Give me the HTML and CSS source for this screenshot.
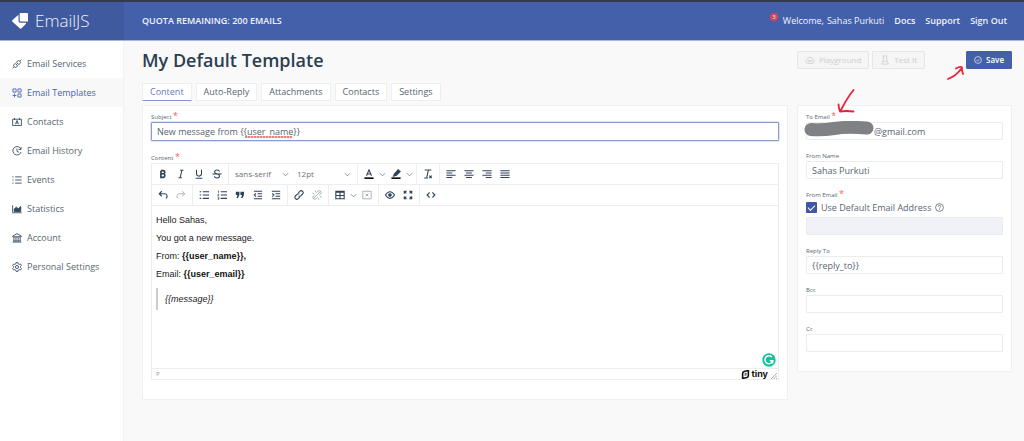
FILE: index.html
```html
<!DOCTYPE html>
<html lang="en">
<head>
<meta charset="utf-8">
<title>EmailJS - My Default Template</title>
<link rel="stylesheet" href="styles.css">
</head>
<body>
<header class="topbar">
  <a class="brand" href="#">
    <svg class="brand-mark" viewBox="0 0 16 16"><path d="M7.700 0H15q1 0 1 1v7.500H9q-1.300 0-1.300-1.300z"/><path d="M6.500 1.800V7.700q0 2 2 2H14.200q0 1-.9 1.900L9.800 15q-1.200 1.300-2.400 0L.5 8.700q-.8-.9 0-1.700z"/></svg>
    <span>EmailJS</span>
  </a>
  <div class="quota">QUOTA REMAINING: 200 EMAILS</div>
  <nav class="user-nav">
    <span class="welcome"><span class="badge">3</span>Welcome,</span>
    <a class="user" href="#">Sahas Purkuti</a>
    <a href="#">Docs</a>
    <a href="#">Support</a>
    <a href="#">Sign Out</a>
  </nav>
</header>
<div class="shell">
  <nav class="sidebar">
    <a href="#"><svg viewBox="0 0 16 16"><path d="M1 15l2-2M13 3l2-2M5 7l4 4-1.500 1.500a2.800 2.800 0 0 1-4 0 2.800 2.800 0 0 1 0-4zM7 5l1.500-1.500a2.800 2.800 0 0 1 4 0 2.800 2.800 0 0 1 0 4L11 9zM7 9l2-2"/></svg>Email Services</a>
    <a href="#" class="active"><svg viewBox="0 0 16 16"><path d="M1.500 1.500h5v5h-5zM9.500 1.500h5v5h-5zM9.500 9.500h5v5h-5zM4 9v6M1 12h6"/></svg>Email Templates</a>
    <a href="#"><svg viewBox="0 0 16 16"><path d="M1 3.500h14v10H1zM4 1.500v3M12 1.500v3M5.500 11.500L8 5.500l2.500 6M6.500 9.500h3"/></svg>Contacts</a>
    <a href="#"><svg viewBox="0 0 16 16"><path d="M14 4.500A6.700 6.700 0 1 0 14.500 9.500M14.500 1.500v4h-4M8 4v4.500l3 1.500"/></svg>Email History</a>
    <a href="#"><svg viewBox="0 0 16 16"><path d="M5 3h10.500M5 8h10.500M5 13h10.500M.5 3h2M.5 8h2M.5 13h2"/></svg>Events</a>
    <a href="#"><svg viewBox="0 0 16 16"><path d="M1 2v12h14.500"/><path d="M3.500 12V8l3.500-3 3 2.500L14 4v8z" fill="currentColor"/></svg>Statistics</a>
    <a href="#"><svg viewBox="0 0 16 16"><path d="M1 6V5l7-4 7 4v1zM3 6v7M6.300 6v7M9.700 6v7M13 6v7M1 14.500h14M2 12.800h12"/></svg>Account</a>
    <a href="#"><svg viewBox="0 0 16 16"><path d="M6.500 1h3l.5 2 1.500.8 2-.6 1.500 2.600L13.600 7.200v1.600l1.400 1.400-1.500 2.600-2-.6-1.500.8-.5 2h-3L6 13l-1.500-.8-2 .6L1 10.200l1.400-1.400V7.200L1 5.800l1.500-2.600 2 .6L6 3z"/><circle cx="8" cy="8" r="2.500"/></svg>Personal Settings</a>
  </nav>
  <main class="page">
    <div class="page-head">
      <h1>My Default Template</h1>
      <div class="actions">
        <button class="btn" disabled><svg viewBox="0 0 16 16"><path d="M4 13.500a3.300 3.300 0 0 1-.8-6.300 5 5 0 0 1 9.600 0 3.300 3.300 0 0 1-.8 6.300zM8 9.500C7 8 4.500 8 4.500 9.800S7 11.500 8 9.800 11.500 8 11.500 9.800 9 11.500 8 9.500z"/></svg>Playground</button>
        <button class="btn" disabled><svg viewBox="0 0 16 16"><path d="M4.500 1.500h7M5.500 1.500V7L2.500 14.500h11L10.500 7V1.500M4.500 10h7"/></svg>Test It</button>
        <div class="save-wrap">
          <button class="btn save"><svg viewBox="0 0 16 16"><circle cx="8" cy="8" r="6.800"/><path d="M5 8.300l2.200 2.200L11 5.800"/></svg>Save</button>
          <svg class="arrow-save" viewBox="0 0 17 14"><path d="M1 13Q9 10 14 3M9 2.500Q13 0 15 1.500Q14.500 4 16 8"/></svg>
        </div>
      </div>
    </div>
    <div class="tabs">
      <button class="tab current">Content</button>
      <button class="tab">Auto-Reply</button>
      <button class="tab">Attachments</button>
      <button class="tab">Contacts</button>
      <button class="tab">Settings</button>
    </div>
    <div class="columns">
      <section class="card">
        <div class="field subject">
          <label for="subject">Subject <i>*</i></label>
          <div class="over">
            <input id="subject" class="focused" type="text" spellcheck="false" value="New message from {{user_name}}">
            <span class="squiggle"></span>
          </div>
        </div>
        <div class="field last">
          <label id="body-label">Content <i>*</i></label>
          <div class="editor">
            <div class="bar">
              <div class="group">
                <button aria-label="Bold"><svg viewBox="0 0 12 12"><path class="w2" d="M3.500 2v8h3a2.200 2.200 0 0 0 0-4.300h-3M3.500 5.700h2.800a1.800 1.800 0 0 0 0-3.700H3.500"/></svg></button>
                <button aria-label="Italic"><svg viewBox="0 0 12 12"><path d="M5 1.500h4M3 10.500h4M7 1.500l-2 9"/></svg></button>
                <button aria-label="Underline"><svg viewBox="0 0 12 12"><path d="M3 1v4.500a3 3 0 0 0 6 0V1M2 11h8"/></svg></button>
                <button aria-label="Strikethrough"><svg viewBox="0 0 12 12"><path d="M9 3Q8.500 1.200 6 1.200T3 3.300Q3 5 6 5.800T9 8.500Q9 10.700 6 10.700T3 8.800M.5 6h11"/></svg></button>
              </div>
              <div class="group">
                <button class="pick font">sans-serif<svg viewBox="0 0 8 8"><path d="M1 2.500l3 3 3-3"/></svg></button>
                <button class="pick size">12pt<svg viewBox="0 0 8 8"><path d="M1 2.500l3 3 3-3"/></svg></button>
              </div>
              <div class="group">
                <button aria-label="Text color"><svg viewBox="0 0 12 12"><path d="M3 8l3-7 3 7M4 6h4"/><path class="w2" stroke="#111" d="M.5 11h11"/></svg></button>
                <button class="mini" aria-label="Text colors"><svg viewBox="0 0 8 8"><path d="M1 2.500l3 3 3-3"/></svg></button>
                <button aria-label="Highlight"><svg viewBox="0 0 12 12"><path d="M4 6l4.500-5L11 3 6.500 7.500 3 8.500z" fill="currentColor"/><path class="w2" stroke="#111" d="M.5 11h11"/></svg></button>
                <button class="mini" aria-label="Highlight colors"><svg viewBox="0 0 8 8"><path d="M1 2.500l3 3 3-3"/></svg></button>
              </div>
              <div class="group">
                <button aria-label="Clear formatting"><svg viewBox="0 0 12 12"><path d="M2 1.200h8M6.500 1.200L4.500 10M1.500 10.800h4.500M7.500 8l3 3M10.500 8l-3 3"/></svg></button>
              </div>
              <div class="group">
                <button aria-label="Align left"><svg viewBox="0 0 12 12"><path d="M.5 2h11M.5 4.700h7M.5 7.400h11M.5 10.100h7"/></svg></button>
                <button aria-label="Align center"><svg viewBox="0 0 12 12"><path d="M.5 2h11M2.500 4.700h7M.5 7.400h11M2.500 10.100h7"/></svg></button>
                <button aria-label="Align right"><svg viewBox="0 0 12 12"><path d="M.5 2h11M4.500 4.700h7M.5 7.400h11M4.500 10.100h7"/></svg></button>
                <button aria-label="Justify"><svg viewBox="0 0 12 12"><path d="M.5 2h11M.5 4.700h11M.5 7.400h11M.5 10.100h11"/></svg></button>
              </div>
            </div>
            <div class="bar">
              <div class="group">
                <button aria-label="Undo"><svg viewBox="0 0 12 12"><path d="M4.500 1.500L1.500 4.500l3 3M1.500 4.500H7.500a3 3 0 0 1 2 5.500"/></svg></button>
                <button class="off" aria-label="Redo"><svg viewBox="0 0 12 12"><path d="M7.500 1.500l3 3-3 3M10.500 4.500H4.500a3 3 0 0 0-2 5.500"/></svg></button>
              </div>
              <div class="group">
                <button aria-label="Bullet list"><svg viewBox="0 0 12 12"><path d="M4.500 2H12M4.500 6H12M4.500 10H12M.8 2h1.800M.8 6h1.800M.8 10h1.800"/></svg></button>
                <button aria-label="Numbered list"><svg viewBox="0 0 12 12"><path d="M4.500 2H12M4.500 6H12M4.500 10H12"/><path stroke-width=".8" d="M1 1h.8v2.500M.8 5h1.500L.8 7h1.700M.8 8.800h1.500v2.400H.8M1.200 10h1"/></svg></button>
                <button aria-label="Quote"><svg viewBox="0 0 12 12"><path fill="currentColor" stroke="none" d="M1 2h4.300v4L3.500 9.500H1.700L3 6H1zM6.500 2h4.300v4L9 9.500H7.200L8.500 6h-2z"/></svg></button>
                <button aria-label="Outdent"><svg viewBox="0 0 12 12"><path d="M1 1.500h10M5.500 4.500H11M5.500 7.500H11M1 10.500h10M3.500 4L1.500 6l2 2"/></svg></button>
                <button aria-label="Indent"><svg viewBox="0 0 12 12"><path d="M1 1.500h10M5.500 4.500H11M5.500 7.500H11M1 10.500h10M1.500 4l2 2-2 2"/></svg></button>
              </div>
              <div class="group">
                <button aria-label="Link"><svg viewBox="0 0 12 12"><path d="M5 3.500L7 1.600a2.200 2.200 0 0 1 3.300 3.200L8 7a2 2 0 0 1-2.500 0M7 8.500L5 10.400A2.200 2.200 0 0 1 1.700 7.200L4 5a2 2 0 0 1 2.500 0"/></svg></button>
                <button class="off" aria-label="Remove link"><svg viewBox="0 0 12 12"><path d="M5 3.500L7 1.600a2.200 2.200 0 0 1 3.300 3.200L8.500 6.500M7 8.500L5 10.400A2.200 2.200 0 0 1 1.700 7.200L3.500 5.500M1 11L11 1M8 9.500v2M9.500 8h2M4 .5v2M.5 4h2"/></svg></button>
              </div>
              <div class="group">
                <button aria-label="Table"><svg viewBox="0 0 12 12"><path d="M1 1.500h10v9H1zM1 2.500h10M1 6.500h10M6 3v7.500"/></svg></button>
                <button class="mini" aria-label="Table options"><svg viewBox="0 0 8 8"><path d="M1 2.500l3 3 3-3"/></svg></button>
                <button class="off" aria-label="Delete table"><svg viewBox="0 0 12 12"><path d="M1 1.500h10v9H1zM4.300 4.300l3.400 3.400M7.700 4.300L4.300 7.700"/></svg></button>
              </div>
              <div class="group">
                <button aria-label="Preview"><svg viewBox="0 0 12 12"><path d="M.5 6Q3 2 6 2t5.500 4Q9 10 6 10T.5 6z"/><circle cx="6" cy="6" r="1.500" fill="currentColor"/></svg></button>
                <button aria-label="Fullscreen"><svg viewBox="0 0 12 12"><path d="M1.500 4.500v-3h3M7.500 1.500h3v3M10.500 7.500v3h-3M4.500 10.500h-3v-3M1.500 1.500L4 4M10.500 1.500L8 4M10.500 10.500L8 8M1.500 10.500L4 8"/></svg></button>
              </div>
              <div class="group">
                <button aria-label="Source code"><svg viewBox="0 0 12 12"><path d="M4.300 3L1.300 6l3 3M7.700 3l3 3-3 3"/></svg></button>
              </div>
            </div>
            <div class="doc" role="textbox" aria-labelledby="body-label">
              <p>Hello Sahas,</p>
              <p>You got a new message.</p>
              <p>From: <b>{{user_name}},</b></p>
              <p>Email: <b>{{user_email}}</b></p>
              <blockquote>{{message}}</blockquote>
              <svg class="grammar" viewBox="0 0 14 14"><circle cx="7" cy="7" r="6.700" fill="#15c39a"/><path d="M9.800 4A4 4 0 1 0 10.800 7.800H7.800M10.800 7.800V10.500" fill="none" stroke="#fff" stroke-width="1.400"/></svg>
            </div>
            <div class="status">
              <span>P</span>
              <span class="tiny"><svg viewBox="0 0 10 10"><path d="M3.500 1.700L8.200.6v5.200Q8.200 7.800 6.500 8.300L1.800 9.400V4.200Q1.800 2.200 3.500 1.700z" fill="none" stroke="#111" stroke-width="1.800"/><path d="M4 5.800l2.200-.5M4 4.300l2.200-.5" stroke="#111"/></svg>tiny</span>
              <svg class="grip" viewBox="0 0 6 6"><path d="M0 6L6 0M2.500 6L6 2.500M5 6l1-1"/></svg>
            </div>
          </div>
        </div>
      </section>
      <aside class="card">
        <svg class="arrow-email" viewBox="0 0 18 26"><path d="M16.500 1Q10 9 3.500 22M1.500 15.500Q2 20 3 22.500Q9 21.500 16.500 22.500"/></svg>
        <div class="field">
          <label for="to">To Email <i>*</i></label>
          <div class="over">
            <input id="to" class="masked" type="text" value="@gmail.com">
            <svg class="scribble" viewBox="0 0 71 16"><path d="M7 8.500Q18 9.500 30 7.500T63 7" fill="none" stroke="#808184" stroke-width="13" stroke-linecap="round"/></svg>
          </div>
        </div>
        <div class="field">
          <label for="name">From Name</label>
          <input id="name" type="text" value="Sahas Purkuti">
        </div>
        <div class="field">
          <label for="from">From Email <i>*</i></label>
          <div class="check">
            <input id="default" type="checkbox" checked>
            <label for="default">Use Default Email Address</label>
            <svg viewBox="0 0 16 16"><circle cx="8" cy="8" r="7"/><path d="M5.800 6.300a2.200 2.200 0 1 1 3.300 1.900Q8 8.800 8 10M8 11.300v1.200"/></svg>
          </div>
          <input id="from" type="text" disabled>
        </div>
        <div class="field">
          <label for="reply">Reply To</label>
          <input id="reply" type="text" value="{{reply_to}}">
        </div>
        <div class="field">
          <label for="bcc">Bcc</label>
          <input id="bcc" type="text">
        </div>
        <div class="field last">
          <label for="cc">Cc</label>
          <input id="cc" type="text">
        </div>
      </aside>
    </div>
  </main>
</div>
</body>
</html>
```
FILE: styles.css
```css
* { box-sizing: border-box; }
body {
  margin: 0;
  min-height: 100vh;
  display: flex;
  flex-direction: column;
  background: #f9f9f9;
  color: #56666f;
  font: 9px/12px "Open Sans", "Noto Sans", sans-serif;
}
a { color: inherit; text-decoration: none; }
button, input { font: inherit; color: inherit; margin: 0; }
svg { fill: none; stroke: currentColor; flex: none; }

.topbar {
  display: flex;
  align-items: stretch;
  height: 41px;
  border-top: 2px solid #343b4c;
  border-bottom: 1px solid #a9b6da;
  background: #4460aa;
  color: #f0f3fb;
}
.brand {
  display: flex;
  align-items: center;
  gap: 7px;
  width: 124px;
  padding-left: 12px;
  background: #3f5a9e;
  font-size: 17px;
  font-weight: 300;
  line-height: 20px;
}
.brand-mark { width: 16px; height: 16px; fill: #fff; stroke: none; }
.quota { flex: 1; align-self: center; padding-left: 18px; font-weight: 600; }
.user-nav { display: flex; align-items: center; gap: 10px; padding-right: 17px; font-weight: 600; }
.welcome { position: relative; font-weight: 400; }
.user { margin-left: -7px; font-weight: 400; }
.badge {
  position: absolute;
  top: -2px;
  left: -13px;
  width: 8px;
  height: 8px;
  border-radius: 4px;
  background: #d64558;
  font-size: 6px;
  line-height: 8px;
  text-align: center;
}

.shell { display: flex; flex: 1; }
.sidebar {
  width: 124px;
  flex: none;
  padding-top: 8px;
  background: #fff;
  border-right: 1px solid #f2f2f2;
}
.sidebar a { display: flex; align-items: center; gap: 5px; height: 29px; padding-left: 12px; }
.sidebar svg { width: 10px; height: 10px; color: #34495e; stroke-width: 1.4; }
.sidebar .active { background: #f8f8f8; color: #4a62b0; font-weight: 500; }
.sidebar .active svg { color: #4a62b0; }

.page { flex: 1; min-width: 0; padding: 9px 12px 12px 18px; }
.page-head { display: flex; justify-content: space-between; align-items: flex-start; height: 33px; }
h1 { margin: 0; color: #2c3e50; font-size: 18px; line-height: 20px; font-weight: 600; }
.actions { display: flex; gap: 3px; padding-top: 1px; }
.btn {
  display: flex;
  align-items: center;
  gap: 4px;
  height: 18px;
  padding: 0 7px;
  border: 1px solid #e6e6e6;
  border-radius: 1px;
  background: #f5f5f5;
  color: #cfcfcf;
  font-size: 8px;
}
.btn svg { width: 10px; height: 10px; stroke-width: 1.3; }
.save-wrap { position: relative; margin-left: 38px; }
.save { background: #4460aa; border-color: #4460aa; color: #fff; font-weight: 600; }
.save svg { width: 8px; height: 8px; }
.arrow-save, .arrow-email { position: absolute; stroke: #e8213c; stroke-width: 1.8; stroke-linecap: round; stroke-linejoin: round; }
.arrow-save { left: -19px; top: 15px; width: 17px; height: 14px; }
.arrow-email { left: 39px; top: -17px; width: 18px; height: 26px; }

.tabs { display: flex; gap: 4px; }
.tab {
  height: 18px;
  padding: 0 7px;
  border: 1px solid #eee;
  background: #fff;
}
.current { color: #6377bd; border-bottom-color: #8699d4; }

.columns { display: grid; grid-template-columns: 1fr 215px; gap: 9px; align-items: start; padding-top: 4px; }
.card { position: relative; padding: 6px 8px 19px; border: 1px solid #f0f0f0; background: #fff; }
.field { display: flex; flex-direction: column; padding-bottom: 11px; }
.field.subject { padding-bottom: 12px; }
.field.last { padding-bottom: 0; }
.field > label { font-size: 6px; line-height: 10px; height: 10px; }
.field i { color: #ff5c5c; font-size: 9px; font-style: normal; line-height: 8px; }
.over { position: relative; display: flex; }
input[type="text"] {
  width: 100%;
  height: 18px;
  padding: 0 5px;
  border: 1px solid #ececec;
  border-radius: 1px;
  background: #fff;
  outline: none;
}
input[type="text"]:disabled { background: #f1f2f8; }
input[type="text"].focused { height: 19px; border-color: #8c9ccf; box-shadow: 0 0 0 1px #dfe4f4; }
input[type="text"].masked { padding-left: 67px; }
.squiggle {
  position: absolute;
  left: 94px;
  top: 14px;
  width: 47px;
  height: 2px;
  background: repeating-linear-gradient(90deg, #f37b7b 0 2px, #fbc3c3 2px 3px);
}
.scribble { position: absolute; left: -2px; top: -1px; width: 71px; height: 16px; }

.editor { border: 1px solid #ededed; }
.bar { display: flex; height: 21px; border-bottom: 1px solid #eee; }
.group { display: flex; padding: 0 2px; border-right: 1px solid #eee; }
.group:last-child { border-right: 0; }
.bar button {
  display: flex;
  align-items: center;
  justify-content: center;
  width: 18px;
  padding: 0;
  border: 0;
  background: none;
  color: #2f4358;
}
.bar svg { width: 10px; height: 10px; stroke-width: 1.3; }
.bar .w2 { stroke-width: 2; }
.bar .mini { width: 9px; }
.bar .mini svg, .bar .pick svg { width: 7px; height: 7px; stroke-width: 1; color: #7c8792; }
.bar .off { color: #a3abb3; }
.bar .off svg { stroke-width: 1.1; }
.bar .pick { justify-content: space-between; width: 62px; padding: 0 4px; color: #66727c; font-size: 8px; }

.doc {
  position: relative;
  min-height: 162px;
  padding: 9px 4px;
  color: #222;
  font: 9px/10px "Liberation Sans", Arial, sans-serif;
}
.doc p { margin: 0 0 8px; }
.doc b { color: #111; }
.doc blockquote { margin: 9px 0 0; padding: 6px 7px; border-left: 2px solid #ccc; font-style: italic; }
.grammar { position: absolute; right: 2px; bottom: 1px; width: 14px; height: 14px; stroke: none; }
.status {
  display: flex;
  align-items: center;
  height: 11px;
  padding-left: 4px;
  border-top: 1px solid #eee;
  color: #8e9aa5;
  font-size: 6px;
}
.tiny {
  display: flex;
  align-items: center;
  gap: 1px;
  margin-left: auto;
  color: #111;
  font: 700 9px/10px Inter, sans-serif;
}
.tiny svg { width: 9px; height: 9px; }
.grip { align-self: flex-end; width: 6px; height: 6px; margin: 0 1px 0 3px; color: #8e9aa5; stroke-width: .8; }

.check { display: flex; align-items: center; gap: 4px; height: 17px; padding-bottom: 2px; }
.check input {
  appearance: none;
  display: grid;
  place-items: center;
  width: 11px;
  height: 11px;
  border-radius: 1px;
  background: #4057a8;
}
.check input::after {
  content: "";
  width: 6px;
  height: 3px;
  margin-bottom: 2px;
  border: solid #fff;
  border-width: 0 0 1px 1px;
  transform: rotate(-45deg);
}
.check svg { width: 9px; height: 9px; stroke-width: 1.4; }
```
